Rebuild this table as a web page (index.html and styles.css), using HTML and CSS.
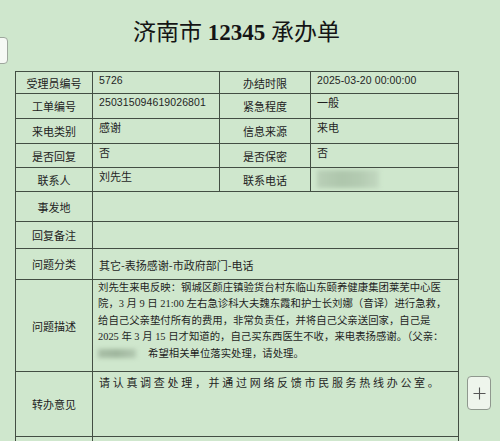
FILE: index.html
```html
<!DOCTYPE html>
<html lang="zh-CN">
<head>
<meta charset="utf-8">
<title>济南市 12345 承办单</title>
<link rel="stylesheet" href="styles.css">
</head>
<body>
<div class="page">
  <h1 class="title"><span class="t-cjk">济南市</span> <b class="t-num">12345</b> <span class="t-cjk">承办单</span></h1>
  <table class="form">
    <colgroup>
      <col class="c1"><col class="c2"><col class="c3"><col class="c4">
    </colgroup>
    <tr class="r22">
      <td class="lbl">受理员编号</td><td class="val num">5726</td>
      <td class="lbl">办结时限</td><td class="val num">2025-03-20 00:00:00</td>
    </tr>
    <tr class="r25">
      <td class="lbl">工单编号</td><td class="val num">250315094619026801</td>
      <td class="lbl">紧急程度</td><td class="val">一般</td>
    </tr>
    <tr class="r25">
      <td class="lbl">来电类别</td><td class="val">感谢</td>
      <td class="lbl">信息来源</td><td class="val">来电</td>
    </tr>
    <tr class="r24">
      <td class="lbl">是否回复</td><td class="val">否</td>
      <td class="lbl">是否保密</td><td class="val">否</td>
    </tr>
    <tr class="r24">
      <td class="lbl">联系人</td><td class="val">刘先生</td>
      <td class="lbl">联系电话</td><td class="val"><span class="blur-phone"></span></td>
    </tr>
    <tr class="r30">
      <td class="lbl">事发地</td><td class="val" colspan="3"></td>
    </tr>
    <tr class="r27">
      <td class="lbl">回复备注</td><td class="val" colspan="3"></td>
    </tr>
    <tr class="r31">
      <td class="lbl">问题分类</td><td class="val mid" colspan="3">其它-表扬感谢-市政府部门-电话</td>
    </tr>
    <tr class="r92">
      <td class="lbl">问题描述</td>
      <td class="val desc" colspan="3">刘先生来电反映：钢城区颜庄镇验货台村东临山东颐养健康集团莱芜中心医<br>院，3 月 9 日 21:00 左右急诊科大夫魏东霞和护士长刘娜（音译）进行急救，<br>给自己父亲垫付所有的费用，非常负责任，并将自己父亲送回家，自己是<br>2025 年 3 月 15 日才知道的，自己买东西医生不收，来电表扬感谢。（父亲：<br><span class="blur-name"></span>希望相关单位落实处理，请处理。</td>
    </tr>
    <tr class="r65">
      <td class="lbl">转办意见</td>
      <td class="val opinion" colspan="3">请认真调查处理，并通过网络反馈市民服务热线办公室。</td>
    </tr>
    <tr class="r40">
      <td class="lbl"></td><td class="val" colspan="3"></td>
    </tr>
  </table>
</div>
<div class="side-tab"></div>
<button class="add-btn" type="button" aria-label="添加">
  <svg width="13" height="13" viewBox="0 0 13 13"><path d="M6.5 0.5V12.5M0.5 6.5H12.5" stroke="#555" stroke-width="1.1" fill="none"/></svg>
</button>
</body>
</html>
```
FILE: styles.css
```css
html, body {
  margin: 0;
  padding: 0;
}
body {
  background: #cfe7cd;
  color: #1f1f1f;
  font-family: "Noto Sans CJK SC", sans-serif;
  height: 441px;
  overflow: hidden;
  position: relative;
}
.page {
  width: 443px;
  margin-left: 15px;
}
.title {
  margin: 0;
  height: 71px;
  padding-top: 19px;
  box-sizing: border-box;
  text-align: center;
  font-family: "Liberation Serif", "Noto Sans CJK SC", serif;
  font-size: 23px;
  line-height: 28px;
  font-weight: normal;
  color: #151515;
}
.t-cjk {
  font-weight: normal;
}
.t-num {
  font-weight: bold;
}
.form {
  width: 443px;
  border-collapse: collapse;
  table-layout: fixed;
}
.c1 { width: 77px; }
.c2 { width: 127px; }
.c3 { width: 91px; }
.c4 { width: 148px; }
.form td {
  border: 1px solid #434e43;
  padding: 1px 5px 0 6px;
  font-size: 11px;
  line-height: 14px;
  vertical-align: top;
  overflow: hidden;
}
.form td.lbl {
  text-align: center;
  vertical-align: middle;
  padding: 0;
  color: #222;
}
.form td.num {
  font-family: "Liberation Sans", sans-serif;
  font-size: 10.5px;
  letter-spacing: 0.1px;
}
.form td.mid {
  vertical-align: middle;
}
.r22 { height: 22px; }
.r24 { height: 24px; }
.r25 { height: 25px; }
.r27 { height: 27px; }
.r30 { height: 30px; }
.r31 { height: 31px; }
.r92 { height: 92px; }
.r65 { height: 65px; }
.r40 { height: 40px; }
.form td.desc {
  font-family: "Liberation Serif", "Noto Sans CJK SC", serif;
  font-size: 10.4px;
  line-height: 16.4px;
  letter-spacing: 0;
  padding: 0 0 0 5px;
  white-space: nowrap;
}
.form td.opinion {
  letter-spacing: 2.7px;
  line-height: 16px;
  padding-top: 2px;
  white-space: nowrap;
}
.blur-phone {
  display: inline-block;
  width: 62px;
  height: 18px;
  margin-top: 1px;
  background: linear-gradient(90deg, #b9cfb7 0%, #aec6ac 40%, #b4cbb2 70%, #c2d8c0 100%);
  filter: blur(2px);
}
.blur-name {
  display: inline-block;
  width: 38px;
  height: 9px;
  margin-right: 12px;
  vertical-align: -1px;
  background: linear-gradient(90deg, #a9bfa7, #9fb69d 50%, #b3c9b1);
  filter: blur(2px);
}
.side-tab {
  position: absolute;
  left: -10px;
  top: 37px;
  width: 16px;
  height: 25px;
  background: #f6f9f5;
  border: 1px solid #9ea79d;
  border-radius: 4px;
}
.add-btn {
  position: absolute;
  left: 467px;
  top: 376px;
  width: 24px;
  height: 34px;
  padding: 0;
  background: #eef5ec;
  border: 1px solid #8f988e;
  border-radius: 4px;
  display: flex;
  align-items: center;
  justify-content: center;
}
```
